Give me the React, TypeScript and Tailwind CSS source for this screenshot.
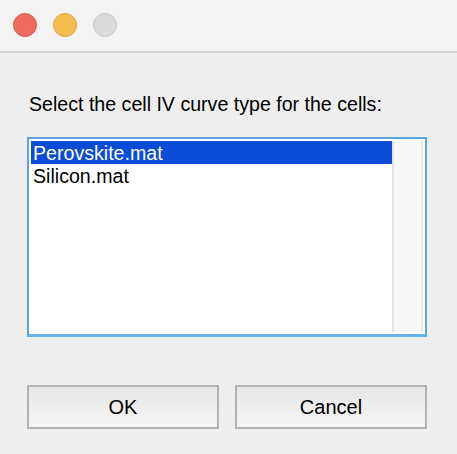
import React, { useState } from 'react';

const files = ['Perovskite.mat', 'Silicon.mat'];

const TrafficLights: React.FC = () => (
    <div className="flex items-center gap-[16px] pl-[13px] pt-[13px]">
        <span className="block w-[24px] h-[24px] rounded-full bg-[#ee6b60] border border-[#d65a50]" />
        <span className="block w-[24px] h-[24px] rounded-full bg-[#f6be50] border border-[#dca33b]" />
        <span className="block w-[24px] h-[24px] rounded-full bg-[#dadada] border border-[#c6c6c6]" />
    </div>
);

const DialogButton: React.FC<{ label: string }> = ({ label }) => (
    <button className="flex-1 h-[44px] flex items-center justify-center border-2 border-[#b2b2b2] bg-gradient-to-b from-[#e7e7e7] to-[#f4f4f4] text-[20px] leading-[22px] text-black">
        {label}
    </button>
);

function App() {
    const [selected, setSelected] = useState(0);

    return (
        <div
            className="w-[457px] h-[454px] bg-[#eeeeee] flex flex-col overflow-hidden"
            style={{ fontFamily: '"Liberation Sans", Arial, sans-serif' }}
        >
            <div className="h-[53px] bg-[#f3f3f3] border-b-2 border-[#d3d3d3] shrink-0">
                <TrafficLights />
            </div>
            <div className="flex flex-col pl-[27px] pr-[30px]">
                <p className="mt-[40px] ml-[2px] text-[19.6px] leading-[23px] text-black">
                    Select the cell IV curve type for the cells:
                </p>
                <div className="mt-[21px] h-[200px] border-x-2 border-t-2 border-b-[3px] border-[#5aa6e1] border-b-[#64b4f4] bg-white p-[2px] flex">
                    <div className="flex-1 flex flex-col">
                        {files.map((f, i) => (
                            <div
                                key={f}
                                onClick={() => setSelected(i)}
                                className={
                                    i === selected
                                        ? 'h-[23px] pl-[2px] pt-[1px] text-[19.6px] leading-[22px] bg-[#0a4cd6] text-white'
                                        : 'h-[23px] pl-[2px] pt-[1px] text-[19.6px] leading-[22px] text-black'
                                }
                            >
                                {f}
                            </div>
                        ))}
                    </div>
                    <div className="w-[31px] flex">
                        <div className="w-[2px] bg-[#e2e2e2]" />
                        <div className="flex-1 bg-gradient-to-r from-[#f6f6f6] to-[#fafafa]" />
                        <div className="w-[2px] bg-[#ebebeb]" />
                    </div>
                </div>
                <div className="mt-[48px] flex gap-[16px]">
                    <DialogButton label="OK" />
                    <DialogButton label="Cancel" />
                </div>
            </div>
        </div>
    );
}

export default App;
